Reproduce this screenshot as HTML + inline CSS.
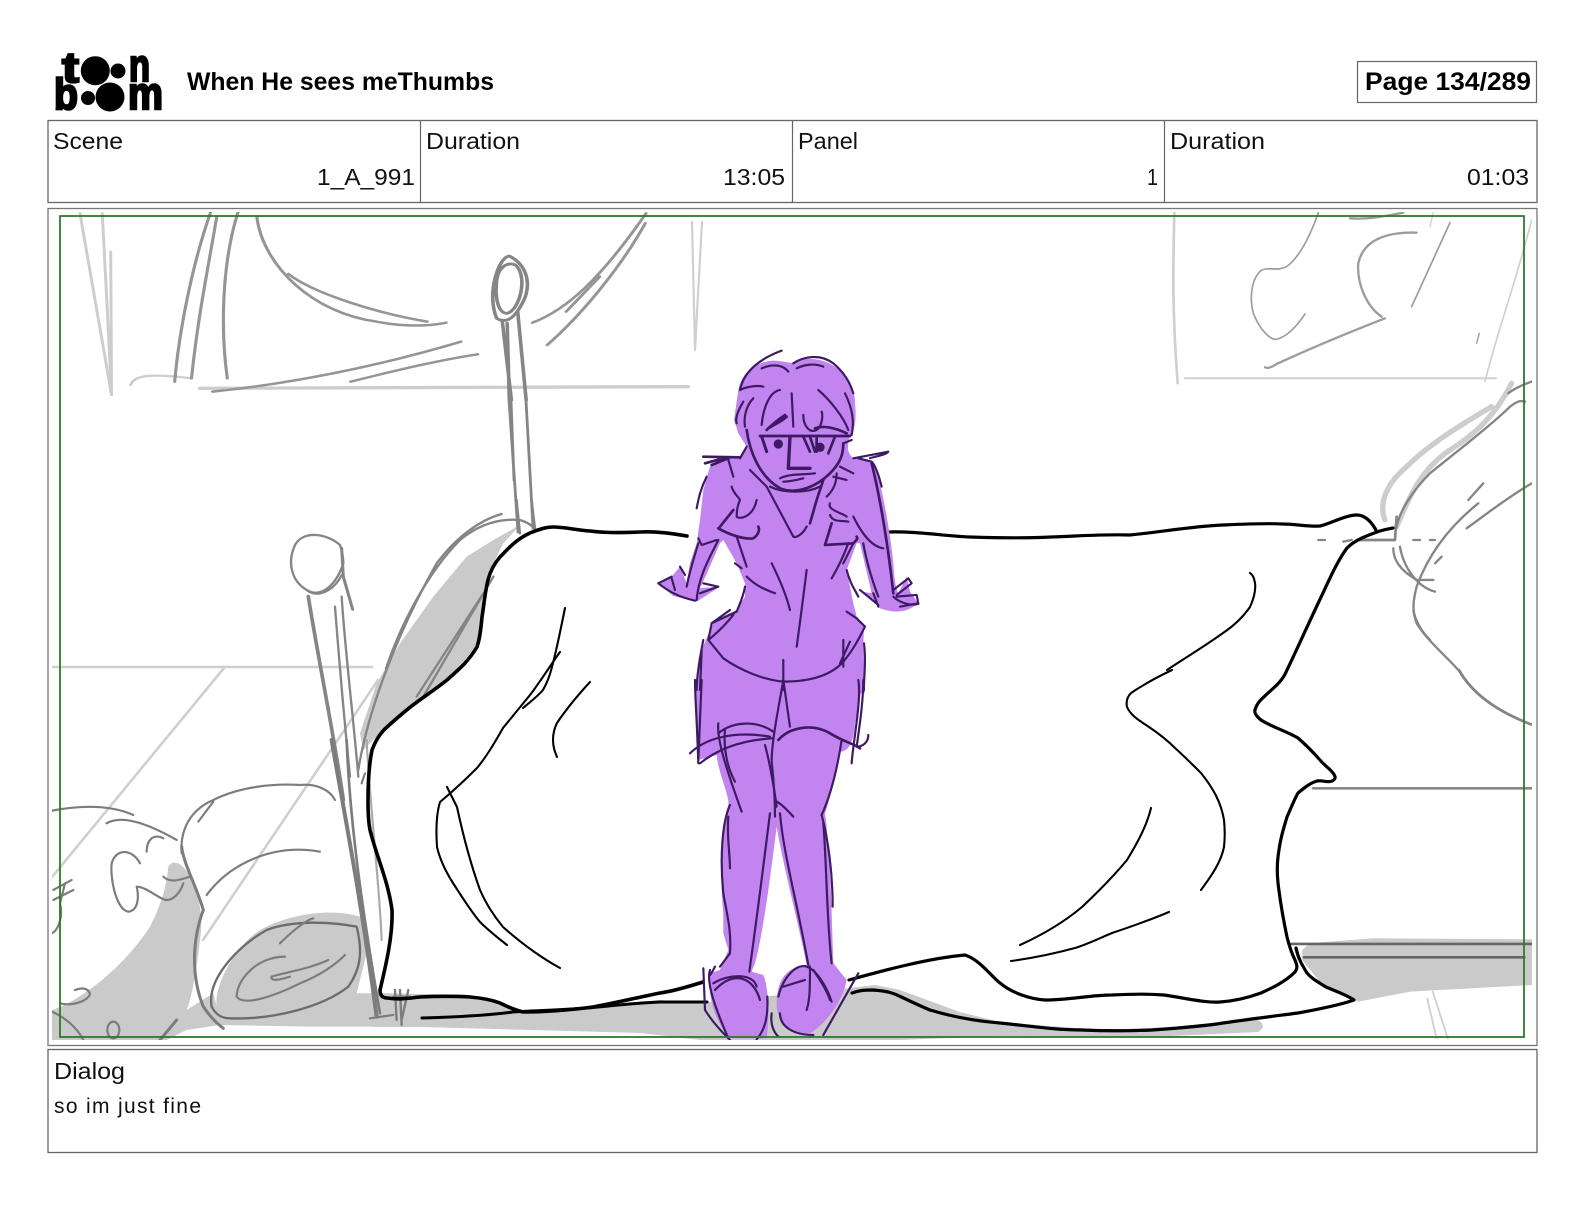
<!DOCTYPE html>
<html><head><meta charset="utf-8"><style>
html,body{margin:0;padding:0;background:#fff;width:1584px;height:1224px;overflow:hidden}
svg{display:block}
text{font-family:"Liberation Sans",sans-serif;fill:#111}
.b{font-weight:bold;fill:#000}
.l{fill:none;stroke-linecap:round;stroke-linejoin:round}
</style></head><body>
<svg width="1584" height="1224" viewBox="0 0 1584 1224" xmlns="http://www.w3.org/2000/svg">
<defs><clipPath id="c"><rect x="52" y="212" width="1480" height="828"/></clipPath></defs>
<rect width="1584" height="1224" fill="#fff"/>

<!-- logo -->
<g>
<text class="b" x="62" y="82" font-size="43" textLength="17" lengthAdjust="spacingAndGlyphs" stroke="#000" stroke-width="2.2">t</text>
<circle cx="95.3" cy="70.7" r="14.5"/><circle cx="118" cy="71" r="7.5"/>
<text class="b" x="129" y="81" font-size="45" textLength="21" lengthAdjust="spacingAndGlyphs" stroke="#000" stroke-width="2.4">n</text>
<text class="b" x="54" y="109" font-size="44" textLength="24" lengthAdjust="spacingAndGlyphs" stroke="#000" stroke-width="2.4">b</text>
<circle cx="88" cy="98" r="7"/><circle cx="110" cy="97" r="14.5"/>
<text class="b" x="128" y="109" font-size="45" textLength="35" lengthAdjust="spacingAndGlyphs" stroke="#000" stroke-width="2.4">m</text>
</g>

<text class="b" x="187" y="90" font-size="25" textLength="307" lengthAdjust="spacingAndGlyphs">When He sees meThumbs</text>

<rect x="1357.5" y="61.5" width="179" height="41" fill="#fff" stroke="#666" stroke-width="1.2"/>
<text class="b" x="1365" y="90" font-size="25" textLength="166" lengthAdjust="spacingAndGlyphs">Page 134/289</text>

<!-- table -->
<rect x="48" y="120.5" width="1489" height="82" fill="#fff" stroke="#666" stroke-width="1.3"/>
<path d="M420.5 120V202M792.5 120V202M1164.5 120V202" stroke="#666" stroke-width="1.2"/>
<g font-size="23">
<text x="53" y="149" textLength="70" lengthAdjust="spacingAndGlyphs">Scene</text>
<text x="317" y="185" textLength="98" lengthAdjust="spacingAndGlyphs">1_A_991</text>
<text x="426" y="149" textLength="94" lengthAdjust="spacingAndGlyphs">Duration</text>
<text x="723" y="185" textLength="62" lengthAdjust="spacingAndGlyphs">13:05</text>
<text x="798" y="149" textLength="60" lengthAdjust="spacingAndGlyphs">Panel</text>
<text x="1147" y="185" textLength="11" lengthAdjust="spacingAndGlyphs">1</text>
<text x="1170" y="149" textLength="95" lengthAdjust="spacingAndGlyphs">Duration</text>
<text x="1467" y="185" textLength="62" lengthAdjust="spacingAndGlyphs">01:03</text>
</g>

<!-- image panel -->
<rect x="48" y="208.5" width="1489" height="837" fill="#fff" stroke="#777" stroke-width="1.3"/>
<g clip-path="url(#c)">

<!-- grey fills -->
<g transform="translate(40,740) scale(.3333)" fill="#cacaca">
<path d="M36,810 C130,780 260,670 330,560 C370,480 380,430 385,380 C400,355 430,370 450,410 C480,470 490,530 480,600 C470,700 450,790 440,810 L520,760 L530,800 C520,740 590,600 680,560 C760,520 880,505 960,530 L985,620 L950,760 L1000,760 L1260,770 L1260,860 L800,860 L540,855 L440,870 L380,900 L36,900 Z"/>
</g>
<path fill="#cacaca" d="M373,993 L470,995 L520,1010 L590,1008 L660,1000 L700,1003 L850,988 L875,985 L900,990 L960,1012 L1000,1022 L1100,1030 L1190,1026 L1258,1020 Q1268,1026 1258,1032 L1150,1037 L1100,1037 L1000,1036 L900,1040 L700,1040 L640,1033 L420,1027 L373,1027 Z"/>
<g transform="translate(260,500) scale(.3333)">
<path fill="#cacaca" d="M780,75 L730,130 L690,210 L665,350 L650,440 L560,540 L470,605 L380,680 L310,750 L300,700 L350,550 L420,430 L520,290 L620,170 L700,120 Z"/>
</g>
<g transform="translate(1000,670) scale(.3731,.3333)">
<path fill="#cacaca" d="M810,840 L830,820 L1000,805 L1428,808 L1428,945 L1100,965 L960,995 L940,980 L860,940 L810,870 Z"/>
</g>

<!-- floor/light construction lines -->
<g class="l" stroke="#cfcfcf" stroke-width="2.6">
<path d="M52,667 L372,667"/>
<path d="M224,668 L52,877"/>
<path d="M378,680 L203,940"/>
<path d="M702,222 L695,350 M692,222 L695,350" stroke-width="2.2"/>
</g>
<g class="l" transform="translate(1000,670) scale(.3731,.3333)" stroke="#d0d0d0" stroke-width="5">
<path d="M1145,985 L1170,1105 M1160,965 L1200,1105"/>
</g>

<!-- top-left wall sketch -->
<g class="l" transform="translate(40,200) scale(.4209,.3333)">
<g stroke="#cdcdcd" stroke-width="7">
<path d="M95,40 L170,585 M148,40 L170,580 M168,155 L170,580"/>
<path d="M215,555 C225,525 260,520 360,535"/>
<path d="M380,565 L1540,560" stroke-width="10"/>
</g>
<g stroke="#959595" stroke-width="7.5">
<path d="M405,38 C360,200 330,400 320,545"/>
<path d="M420,50 C400,200 375,350 360,535"/>
<path d="M470,38 C430,200 430,400 445,535"/>
<path d="M515,50 C530,200 650,340 800,365 C860,380 920,380 965,368"/>
<path d="M590,222 C650,280 800,340 920,365"/>
<path d="M410,575 C600,550 800,500 1000,425"/>
<path d="M738,545 C850,510 950,480 1040,463"/>
<path d="M1170,368 C1250,330 1330,240 1440,40"/>
<path d="M1205,435 C1300,330 1390,180 1438,70"/>
<path d="M1250,335 L1330,230"/>
</g>
<g stroke="#858585" stroke-width="8.5">
<path d="M1085,355 C1060,280 1090,170 1115,168 C1150,190 1170,240 1150,300 C1130,350 1110,375 1085,355"/>
<path d="M1085,240 C1090,200 1110,185 1130,195 C1160,230 1140,330 1110,340 C1090,340 1080,300 1085,240"/>
<path d="M1110,370 L1115,600 M1098,360 L1120,600 M1135,335 L1155,600"/>
</g>
</g>
<path class="l" stroke="#858585" stroke-width="2.8" d="M509,400 L518,532 M526,400 L533,528 M511,400 L514,480"/>

<!-- top-right sketch -->
<g class="l" transform="translate(1130,40) scale(.3333)">
<g stroke="#d0d0d0">
<path d="M133,518 C130,650 125,800 143,1030" stroke-width="8"/>
<path d="M165,1015 L1098,1015" stroke-width="6"/>
<path d="M1205,540 C1160,720 1100,880 1065,1025" stroke-width="5"/>
<path d="M910,518 L900,560" stroke-width="4"/>
</g>
<g stroke="#9c9c9c">
<path stroke-width="5" d="M565,518 C540,590 510,650 470,680 C440,695 420,680 395,690 C370,710 355,760 370,820 C390,870 420,900 440,898 C470,890 500,860 525,822"/>
<path stroke-width="7" d="M860,578 C770,575 700,600 685,670 C680,730 710,800 755,830"/>
<path stroke-width="7" d="M765,835 C650,880 520,935 440,972 C420,985 410,985 405,982"/>
<path stroke-width="5" d="M960,548 L845,800"/>
<path stroke-width="7" d="M660,535 C720,540 780,525 820,518"/>
<path stroke-width="4" d="M1048,880 L1040,910"/>
</g>
</g>

<!-- right furniture sketch -->
<g class="l" transform="translate(1130,370) scale(.3333)">
<path stroke="#cdcdcd" stroke-width="16" d="M765,450 C745,400 770,340 830,290 C900,220 1000,160 1085,110"/>
<path stroke="#cdcdcd" stroke-width="16" d="M800,470 C840,380 870,300 960,240 C1040,190 1100,130 1145,40"/>
<g stroke="#858585" stroke-width="7">
<path d="M800,470 C810,420 850,360 900,310 C960,260 1080,170 1140,110 C1160,95 1170,90 1185,95"/>
<path d="M800,440 L795,510 L690,510" stroke-width="8"/>
<path d="M565,510 L585,510 M640,515 L665,510 M850,510 L870,510 M900,510 L915,510"/>
<path d="M790,535 C790,570 810,600 860,630 L910,630"/>
<path d="M810,530 C820,590 860,650 915,665"/>
<path d="M1045,400 C970,460 900,540 860,650 C850,690 845,720 860,760 C890,810 950,860 985,900"/>
<path d="M1010,475 C1060,440 1120,390 1205,340"/>
<path d="M1015,390 L1060,340"/>
<path d="M915,580 L935,560"/>
<path d="M850,720 C860,770 890,800 900,810"/>
<path d="M1135,70 C1160,50 1190,40 1205,35"/>
</g>
</g>
<g class="l" transform="translate(1000,670) scale(.3731,.3333)">
<path stroke="#858585" stroke-width="8" d="M1230,0 C1260,60 1320,120 1428,165"/>
<path stroke="#888" stroke-width="8" d="M840,355 L1428,355"/>
<path stroke="#666" stroke-width="8" d="M780,822 L1428,822 M815,862 L1405,862"/>
</g>

<!-- left bed post -->
<g class="l" transform="translate(260,500) scale(.3333)" stroke="#858585" stroke-width="7">
<path d="M240,135 C200,100 130,90 105,135 C80,190 95,250 150,275 C190,290 230,250 250,190 C250,170 245,150 240,135"/>
<path d="M140,270 C170,295 220,275 245,225"/>
<path d="M245,145 L250,230 L278,328" stroke-width="9"/>
<path d="M225,320 C235,450 255,680 270,830"/>
<path d="M245,290 C255,450 280,650 295,830"/>
<path d="M145,290 C170,450 230,750 250,900" stroke-width="11"/>
<path d="M295,810 C320,650 400,420 530,190 C590,110 660,60 725,42"/>
<path d="M378,505 C420,380 500,220 600,120 C660,70 720,55 780,60 C805,68 815,75 825,90"/>
<path d="M470,590 L670,280 M490,590 L700,230"/>
<path d="M770,0 L780,100 M815,0 L825,85"/>
</g>

<!-- pet / pillow / roll -->
<g class="l" transform="translate(40,740) scale(.3333)" stroke="#7c7c7c" stroke-width="6.5">
<path d="M875,0 C900,150 960,450 1010,830" stroke-width="12"/>
<path d="M920,0 C930,250 965,500 1020,820" stroke-width="8"/>
<path d="M980,0 C990,200 1020,450 1025,600" stroke="#aaa"/>
<path d="M965,130 L975,100 M990,835 L1060,825"/>
<path d="M1065,750 L1070,840 M1080,750 L1085,855 M1105,750 L1085,840 M1060,770 L1110,770" stroke-width="7"/>
<path d="M425,340 C420,270 450,210 520,180 C600,140 700,130 780,135 C830,130 870,150 885,180"/>
<path d="M475,245 L520,185"/>
<path d="M500,465 C570,370 700,310 840,335"/>
<path d="M425,320 C430,370 470,440 490,510 C460,590 450,700 490,800 C510,830 530,850 550,865" stroke-width="9"/>
<path d="M515,800 C500,720 590,620 680,570 C760,540 870,545 950,560 C970,640 960,690 925,740 C850,800 700,840 570,835 C540,835 525,820 515,800" stroke="#6c6c6c" stroke-width="7"/>
<path d="M720,610 C760,570 800,540 820,535"/>
<path d="M735,650 C650,650 590,720 590,770 C610,800 700,770 780,730 C830,710 880,680 915,645"/>
<path d="M865,660 C800,690 720,700 695,710 C690,725 720,720 750,710"/>
<path d="M36,212 C100,200 200,190 280,225"/>
<path d="M200,250 C250,220 340,260 410,300"/>
<path d="M320,335 C320,300 340,280 370,295"/>
<path d="M300,370 C280,330 230,320 215,370 C210,420 230,510 265,515 C300,510 295,460 290,440 C320,440 360,480 380,480 C400,480 420,460 430,430"/>
<path d="M370,410 C390,430 420,420 450,410"/>
<path d="M40,450 L95,420 M40,480 L100,450 M60,490 L75,430"/>
<path d="M60,490 C70,530 55,570 36,580"/>
<path d="M60,790 C100,800 150,780 150,760 C140,740 120,745 105,750"/>
<path d="M36,815 C70,830 110,860 130,900"/>
<ellipse cx="220" cy="870" rx="18" ry="25"/>
<path d="M360,900 L410,840" stroke-width="9"/>
</g>

<!-- black sheet outline -->
<g class="l" stroke="#000">
<path stroke-width="3.6" d="M687,536 C670,533 655,531 640,532 C620,533 605,533 590,531 C575,530 565,527 553,527 C545,527 538,530 530,533 C515,540 508,549 500,557 C493,565 490,572 488,580 C485,592 484,605 482,617 C481,628 480,638 477,647 C468,662 458,670 447,680 C437,688 428,694 417,702 C406,710 397,718 387,727 C380,733 375,742 372,750 C369,765 368,780 368,800 C368,810 368,820 370,830 C376,855 388,880 392,910 C393,935 386,965 380,990 C380,996 383,998 387,998 C400,1000 410,998 420,997 C440,996 455,996 470,997 C482,998 492,1000 500,1003 C508,1007 515,1010 523,1012 C545,1012 570,1010 593,1007 C615,1003 640,997 660,993 C675,991 690,986 703,982"/>
<path stroke-width="3" d="M422,1018 C460,1017 490,1015 513,1012 C530,1011 560,1010 587,1008 C610,1006 635,1003 660,1002 L707,1002"/>
<path stroke-width="3.2" d="M852,993 C860,990 866,990 873,990 C885,991 890,992 897,995 C910,1001 920,1006 930,1010"/>
<path stroke-width="3.2" d="M849,980 C885,970 930,958 965,955 C980,960 990,975 1000,983 C1012,993 1030,999 1045,1000 C1070,1000 1090,995 1112,995 C1130,994 1150,994 1164,995 C1185,998 1205,1003 1220,1002 C1235,1001 1250,997 1261,993 C1272,988 1285,982 1295,972 C1298,968 1297,965 1295,960 C1291,952 1289,945 1287,937 C1283,918 1280,900 1278,883 C1277,873 1277,865 1278,857 C1280,840 1283,830 1287,817 C1291,808 1294,800 1298,793 C1304,788 1310,783 1317,781 C1323,780 1328,783 1332,781 C1336,779 1336,777 1333,773 C1329,768 1325,766 1320,760 C1313,752 1306,745 1298,738 C1286,731 1272,727 1261,720 C1256,716 1254,713 1255,710 C1257,702 1263,698 1268,693 C1276,686 1283,680 1287,670 C1299,645 1310,620 1323,593 C1330,578 1338,560 1347,548 C1355,540 1366,536 1377,532 C1382,530 1388,529 1393,528"/>
<path stroke-width="3.2" d="M888,532 C915,531 945,536 970,537 C1000,538 1030,538 1051,537 C1080,536 1105,534 1130,535 C1160,532 1195,526 1223,525 C1245,524 1265,523 1283,524 C1295,524 1310,527 1320,526 C1330,524 1345,515 1357,515 C1365,515 1372,522 1377,532"/>
<path stroke-width="3.2" d="M930,1010 C950,1016 975,1021 1000,1023 C1030,1026 1055,1030 1082,1030 C1105,1031 1130,1031 1152,1030 C1180,1028 1205,1026 1223,1023 C1250,1019 1275,1016 1298,1013 C1320,1009 1340,1005 1354,1000 C1345,994 1335,991 1326,987 C1318,982 1312,979 1307,973 C1302,965 1298,958 1296,948"/>
<g stroke-width="2.1">
<path d="M1172,670 C1155,678 1143,685 1131,693 C1127,697 1126,702 1127,707 C1131,716 1140,721 1149,727 C1158,733 1167,740 1175,748 C1185,757 1193,765 1201,773 C1213,788 1221,802 1224,820 C1225,830 1225,838 1224,847 C1221,862 1212,875 1201,890"/>
<path d="M1167,670 C1185,658 1205,646 1223,633 C1235,625 1243,617 1250,607 C1254,598 1256,590 1255,583 C1254,578 1253,575 1250,573"/>
<path d="M1151,808 C1147,825 1138,842 1127,860 C1112,878 1098,892 1082,907 C1063,923 1042,935 1020,945"/>
<path d="M1169,912 C1150,920 1130,927 1112,933 C1100,938 1088,944 1075,948 C1053,954 1033,958 1011,961"/>
<path d="M565,608 C561,628 557,648 552,667 C550,675 547,683 543,690 C537,697 530,702 523,708"/>
<path d="M560,652 C550,666 540,682 530,695 C521,706 512,717 503,728 C495,742 487,756 477,768 C465,780 452,792 440,802 C436,815 436,832 437,847 C440,860 446,872 453,883 C462,897 470,910 480,922 C488,930 498,938 507,945"/>
<path d="M447,787 L457,807 C463,835 471,865 480,890 C486,904 494,916 503,927 C520,942 540,957 560,968"/>
<path d="M590,682 C578,695 567,708 557,723 C554,729 553,735 553,740 C553,747 555,752 557,757"/>
</g>
</g>

<!-- purple figure fill -->
<g transform="translate(640,330) scale(.3333)" fill="#c284ef">
<path d="M295,180 C305,125 350,95 400,92 C430,92 450,102 460,97 C490,82 540,82 580,107 C620,130 645,170 645,220 C650,270 645,300 630,320 C620,350 622,370 640,385 C680,385 705,400 715,440 C730,500 750,600 760,700 C763,740 765,770 775,790 L800,740 L810,785 L835,820 C800,850 760,850 720,835 L665,785 L695,790 L660,640 L650,640 L620,720 L640,820 L650,860 L672,890 L670,950 L675,1090 L170,1090 L185,960 L210,900 L225,870 L290,840 L315,800 L315,760 L290,700 L250,630 L240,640 L205,720 L180,775 L240,770 L170,815 L100,798 L55,760 L95,740 L120,710 L140,760 L150,700 L170,640 L180,570 L190,480 L210,410 L250,385 L300,380 L320,350 L295,310 L282,270 Z"/>
</g>
<g transform="translate(640,680) scale(.3333)" fill="#c284ef">
<path d="M165,0 L175,240 L230,225 C235,280 270,350 265,375 C240,450 240,600 250,700 L250,760 L265,810 L240,870 L210,880 C200,960 235,1040 270,1075 L380,1075 C390,1000 385,920 370,885 L335,875 L345,850 C370,760 395,560 410,440 C430,560 480,750 500,855 C440,860 410,900 410,970 C410,1030 450,1060 510,1060 C560,1030 610,960 620,900 L580,850 C575,700 570,500 555,400 C575,340 590,270 600,215 C625,215 640,190 645,130 L670,0 Z"/>
</g>

<!-- figure lines -->
<g class="l" transform="translate(640,330) scale(.3333)" stroke="#3d1a63" stroke-width="6.5">
<path d="M300,180 C310,130 350,90 425,62"/>
<path d="M365,115 C400,100 430,105 445,125"/>
<path d="M460,100 C490,80 540,70 580,100 C610,125 630,155 640,190"/>
<path d="M470,115 C490,105 520,98 550,110"/>
<path d="M300,180 C320,170 350,165 370,170"/>
<path d="M310,215 C295,240 285,265 290,280"/>
<path d="M340,205 C320,225 310,260 315,290"/>
<path d="M365,285 C370,230 390,185 420,180"/>
<path d="M455,190 L460,290"/>
<path d="M535,180 C570,210 610,260 625,300"/>
<path d="M615,190 C635,230 645,270 635,315"/>
<path d="M380,300 C395,285 420,265 435,255 M385,295 C400,285 425,275 440,260" stroke-width="8"/>
<path d="M490,255 C490,290 510,310 530,300 C545,290 550,260 545,245"/>
<path d="M525,295 C550,285 590,295 620,310" stroke-width="8"/>
<path d="M360,318 L630,318" stroke-width="8"/>
<path d="M365,320 L380,365" stroke-width="9"/>
<path d="M450,320 L445,415 L510,415" stroke-width="10"/>
<path d="M490,320 L510,365 M510,320 L525,365 M530,325 L530,365 M585,320 L565,370" stroke-width="8"/>
<path d="M610,340 L635,330"/>
<path d="M420,445 C450,430 490,435 525,430"/>
<path d="M430,455 C450,455 470,450 490,445"/>
<path d="M320,300 C330,370 360,440 420,475 C470,495 530,470 570,430 C600,400 610,375 610,340" stroke-width="8"/>
<path d="M330,420 L380,470 L460,620 C470,625 490,610 500,590"/>
<path d="M550,450 L530,510 L510,580" stroke-width="8"/>
<path d="M390,470 C430,490 500,490 540,470"/>
<path d="M190,380 L300,382 M195,400 L250,385 M215,405 L265,385" stroke-width="8"/>
<path d="M200,440 C180,480 175,510 170,535"/>
<path d="M265,390 L280,440"/>
<path d="M320,350 L300,385"/>
<path d="M275,470 C280,490 295,500 300,510 C290,530 290,550 290,560 C300,570 340,560 350,510"/>
<path d="M235,595 C260,610 310,630 340,625 C355,615 360,600 355,590 M280,540 L240,590" stroke-width="8"/>
<path d="M290,620 L320,710"/>
<path d="M285,700 L305,715"/>
<path d="M175,625 L185,645 L230,630"/>
<path d="M235,630 C210,680 175,740 170,810"/>
<path d="M175,640 C160,690 150,720 140,770"/>
<path d="M55,760 C80,780 110,800 165,812"/>
<path d="M55,760 L95,740 M95,745 L105,780 M120,710 L135,735 M180,790 L235,770 L190,760"/>
<path d="M395,700 C420,750 440,800 450,840"/>
<path d="M500,720 C490,800 480,880 470,950"/>
<path d="M320,740 C350,770 380,780 405,790"/>
<path d="M315,770 C310,800 300,820 290,845 L215,880 L205,930 L250,985 C300,1020 370,1050 430,1055 C500,1055 570,1040 610,995 C640,960 660,920 675,890 L650,865 L620,845"/>
<path d="M215,880 L270,840 M205,930 C230,910 260,880 280,855"/>
<path d="M575,745 C590,720 610,680 625,640"/>
<path d="M640,640 L610,700 M620,720 C630,760 645,780 655,800"/>
<path d="M610,930 L610,1010 M630,935 L600,1000"/>
<path d="M190,930 C180,980 170,1040 170,1080 M185,960 L180,1080"/>
<path d="M672,940 C680,1000 670,1050 672,1080"/>
<path d="M430,990 L430,1080"/>
<path d="M560,500 C570,490 590,470 590,430"/>
<path d="M600,410 L640,430 M580,440 L620,450"/>
<path d="M570,520 C560,540 610,550 620,560"/>
<path d="M570,555 C580,580 610,570 625,575"/>
<path d="M575,580 L555,645 L640,640 C650,630 655,625 650,620" stroke-width="8"/>
<path d="M640,385 L745,365 C740,375 700,380 690,385"/>
<path d="M655,385 L695,395 C710,410 720,450 725,470"/>
<path d="M695,400 C720,500 745,650 760,790" stroke-width="8"/>
<path d="M640,560 C660,600 690,650 730,655"/>
<path d="M670,640 C680,700 700,760 715,800"/>
<path d="M660,780 L715,825 M700,790 L715,830"/>
<path d="M760,780 L805,745 L815,760 L770,795 M770,800 L830,795 L835,820 L780,830"/>
<path d="M760,800 C770,810 800,830 835,822"/>
<circle cx="415" cy="342" r="14" fill="#3d1a63" stroke="none"/>
<circle cx="540" cy="352" r="14" fill="#3d1a63" stroke="none"/>
</g>
<g class="l" transform="translate(640,680) scale(.3333)" stroke="#3d1a63" stroke-width="6.5">
<path d="M165,0 C165,50 170,100 175,250 M185,0 L175,240"/>
<path d="M150,220 C190,180 270,150 390,170"/>
<path d="M180,250 C230,210 300,180 400,175"/>
<path d="M235,130 C230,180 260,270 305,395"/>
<path d="M255,150 C250,200 260,260 285,305"/>
<path d="M235,160 C270,130 340,115 400,155"/>
<path d="M430,0 C420,60 395,180 395,245 C400,290 405,350 405,410"/>
<path d="M430,0 L450,140"/>
<path d="M375,195 C390,250 405,340 410,380"/>
<path d="M415,180 C450,140 520,130 570,160 C610,185 640,190 660,205" stroke-width="8"/>
<path d="M605,180 C590,280 570,350 545,405"/>
<path d="M655,0 C665,60 640,180 635,250"/>
<path d="M670,0 C670,60 660,130 650,200 C665,200 685,190 685,165"/>
<path d="M270,375 C245,430 240,540 250,640 C260,700 275,750 270,820 L240,860"/>
<path d="M265,410 C260,470 270,520 270,565"/>
<path d="M390,400 C375,520 350,720 328,875"/>
<path d="M410,365 C430,375 450,400 460,410"/>
<path d="M420,400 C430,520 470,660 505,855"/>
<path d="M545,405 C565,480 578,580 578,680"/>
<path d="M550,430 C560,550 560,720 575,850"/>
<path d="M190,865 L195,990 C220,1030 250,1060 270,1080"/>
<path d="M210,870 C200,900 215,960 265,1075"/>
<path d="M225,860 C220,870 215,880 210,885"/>
<path d="M225,930 C280,870 340,890 360,960"/>
<path d="M220,910 C270,880 340,880 350,920"/>
<path d="M382,950 C385,1010 375,1050 350,1078"/>
<path d="M395,1000 C390,1040 405,1060 415,1070"/>
<path d="M420,1000 C420,1040 460,1065 520,1065"/>
<path d="M415,950 C430,890 470,850 500,860 C530,870 560,920 575,965"/>
<path d="M430,920 L495,900"/>
<path d="M510,860 C510,920 510,960 500,990"/>
<path d="M550,1065 L655,880"/>
<path d="M520,870 C540,900 560,930 570,960"/>
</g>
</g>

<!-- green frame -->
<rect x="60" y="216" width="1464" height="821" fill="none" stroke="#2c7a2c" stroke-width="1.8"/>

<!-- dialog -->
<rect x="48" y="1049.5" width="1489" height="103" fill="#fff" stroke="#666" stroke-width="1.3"/>
<text x="54" y="1079" font-size="23" textLength="71" lengthAdjust="spacingAndGlyphs">Dialog</text>
<text x="54" y="1113" font-size="21" textLength="147" lengthAdjust="spacing">so im just fine</text>
</svg>
</body></html>
